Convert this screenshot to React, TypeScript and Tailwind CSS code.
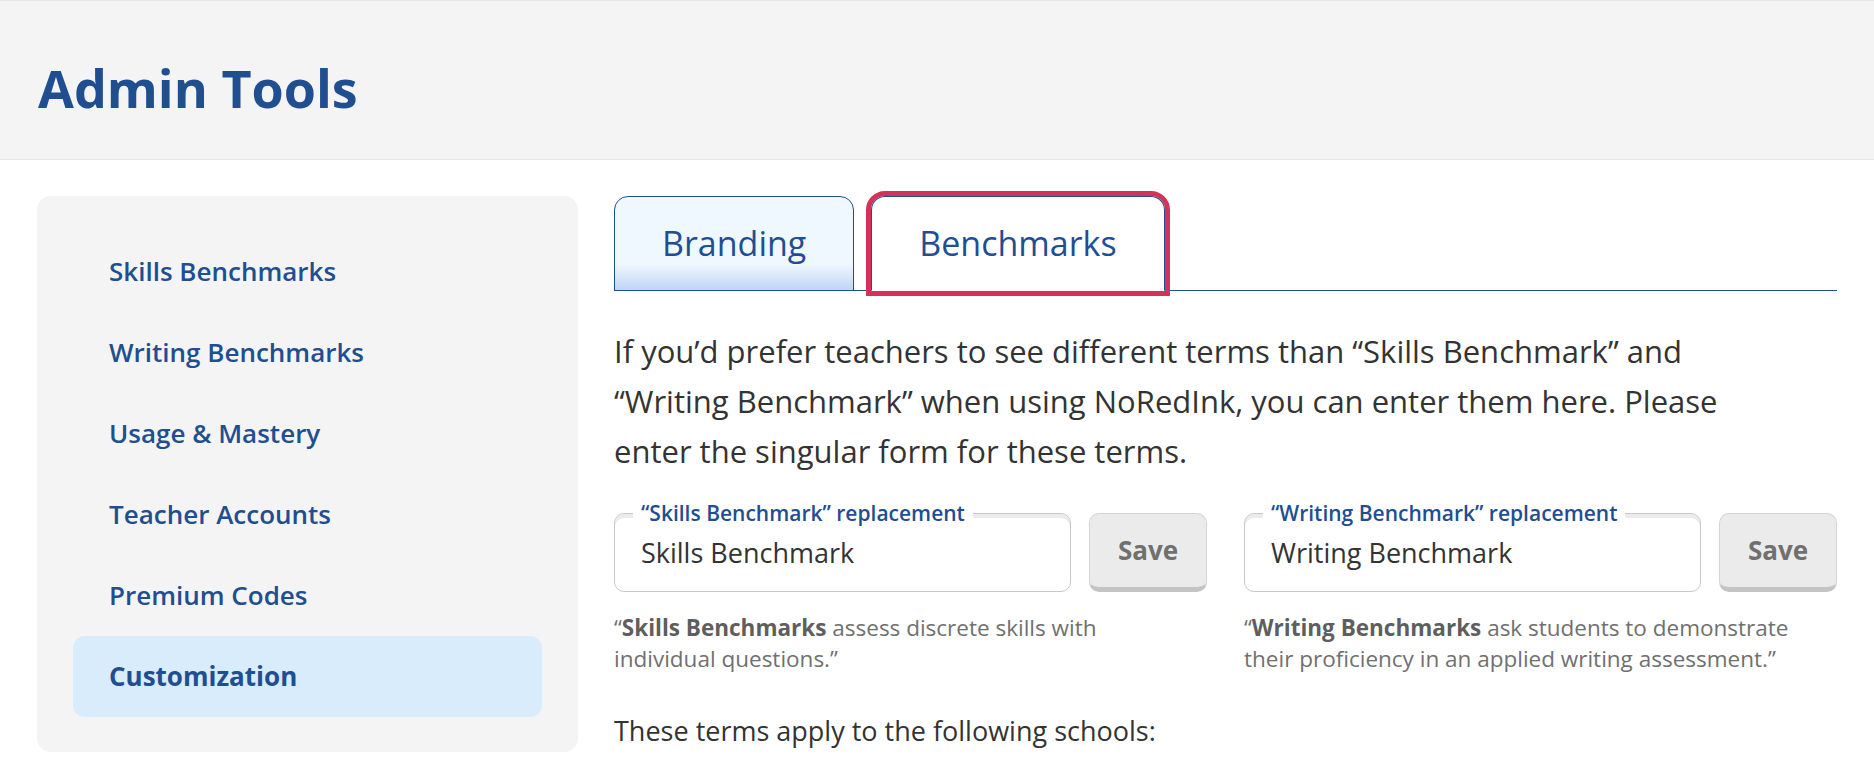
import { useState } from "react";

const navItems = [
  "Skills Benchmarks",
  "Writing Benchmarks",
  "Usage & Mastery",
  "Teacher Accounts",
  "Premium Codes",
  "Customization",
];

const tabs = ["Branding", "Benchmarks"];

interface TermField {
  label: string;
  value: string;
  term: string;
  description: string;
}

const fields: TermField[] = [
  {
    label: "“Skills Benchmark” replacement",
    value: "Skills Benchmark",
    term: "Skills Benchmarks",
    description: "assess discrete skills with individual questions.”",
  },
  {
    label: "“Writing Benchmark” replacement",
    value: "Writing Benchmark",
    term: "Writing Benchmarks",
    description: "ask students to demonstrate their proficiency in an applied writing assessment.”",
  },
];

const App = () => {
  const [activeNav, setActiveNav] = useState("Customization");
  const [activeTab, setActiveTab] = useState("Benchmarks");

  return (
    <div className="min-h-screen bg-white font-['Open_Sans',sans-serif] text-[#333]">
      {/* Header */}
      <header className="border-y border-[#e6e6e6] bg-[#f4f4f4] px-[38px] pt-[60px] pb-[45px]">
        <h1 className="text-[52px] font-bold leading-[53px] text-[#1f4e91]">Admin Tools</h1>
      </header>

      <div className="flex gap-[36px] px-[37px] pt-[36px]">
        {/* Sidebar */}
        <nav className="w-[541px] shrink-0 self-start rounded-[14px] bg-[#f4f4f4] px-[36px] py-[35px]">
          {navItems.map((item) => {
            const active = item === activeNav;
            return (
              <button
                key={item}
                onClick={() => setActiveNav(item)}
                className={`flex h-[81px] w-full items-center rounded-[12px] px-[36px] text-left text-[26px] text-[#1f4e91] ${
                  active ? "bg-[#d8ecfb] font-bold" : "font-semibold"
                }`}
              >
                {item}
              </button>
            );
          })}
        </nav>

        {/* Main */}
        <main className="min-w-0 flex-1">
          <div className="flex gap-[17px] border-b border-[#1f4e91]">
            {tabs.map((tab) => {
              const active = tab === activeTab;
              return (
                <button
                  key={tab}
                  onClick={() => setActiveTab(tab)}
                  className={`-mb-px flex h-[95px] items-center rounded-t-[14px] border border-[#1f4e91] px-[47px] text-[34px] text-[#1f4e91] ${
                    active
                      ? "border-b-white bg-white outline-[5px] outline-[#d3325a] outline-solid"
                      : "border-b-[#1f4e91] bg-[linear-gradient(to_bottom,#f0f8ff_0%,#f0f8ff_72%,#c0d4f6_100%)]"
                  }`}
                >
                  {tab}
                </button>
              );
            })}
          </div>

          <p className="mt-[35px] max-w-[1150px] text-[31px] leading-[50px]">
            If you’d prefer teachers to see different terms than “Skills Benchmark” and “Writing Benchmark” when
            using NoRedInk, you can enter them here. Please enter the singular form for these terms.
          </p>

          <div className="mt-[37px] grid grid-cols-2 gap-[37px]">
            {fields.map((field) => (
              <div key={field.label}>
                <div className="flex gap-[18px]">
                  <div className="relative flex-1">
                    <input
                      defaultValue={field.value}
                      className="h-[79px] w-full rounded-[10px] border border-[#c8c8c8] pl-[26px] text-[27px] text-[#333] shadow-[inset_0_4px_0_0_#ebebeb] outline-none"
                    />
                    <span className="absolute -top-[15px] left-[19px] bg-white px-[8px] text-[21px] font-semibold text-[#1f4e91]">
                      {field.label}
                    </span>
                  </div>
                  <button className="h-[79px] w-[118px] shrink-0 rounded-[10px] border border-b-[5px] border-[#d4d4d4] border-b-[#c4c4c4] bg-[#ebebeb] text-[26px] font-bold text-[#707070]">
                    Save
                  </button>
                </div>
                <p className="mt-[20px] max-w-[566px] text-[22.5px] leading-[31px] text-[#707070]">
                  “<span className="font-bold text-[#5e5e5e]">{field.term}</span> {field.description}
                </p>
              </div>
            ))}
          </div>

          <p className="mt-[37px] text-[27px] leading-[40px]">These terms apply to the following schools:</p>
        </main>
      </div>
    </div>
  );
};

export default App;
